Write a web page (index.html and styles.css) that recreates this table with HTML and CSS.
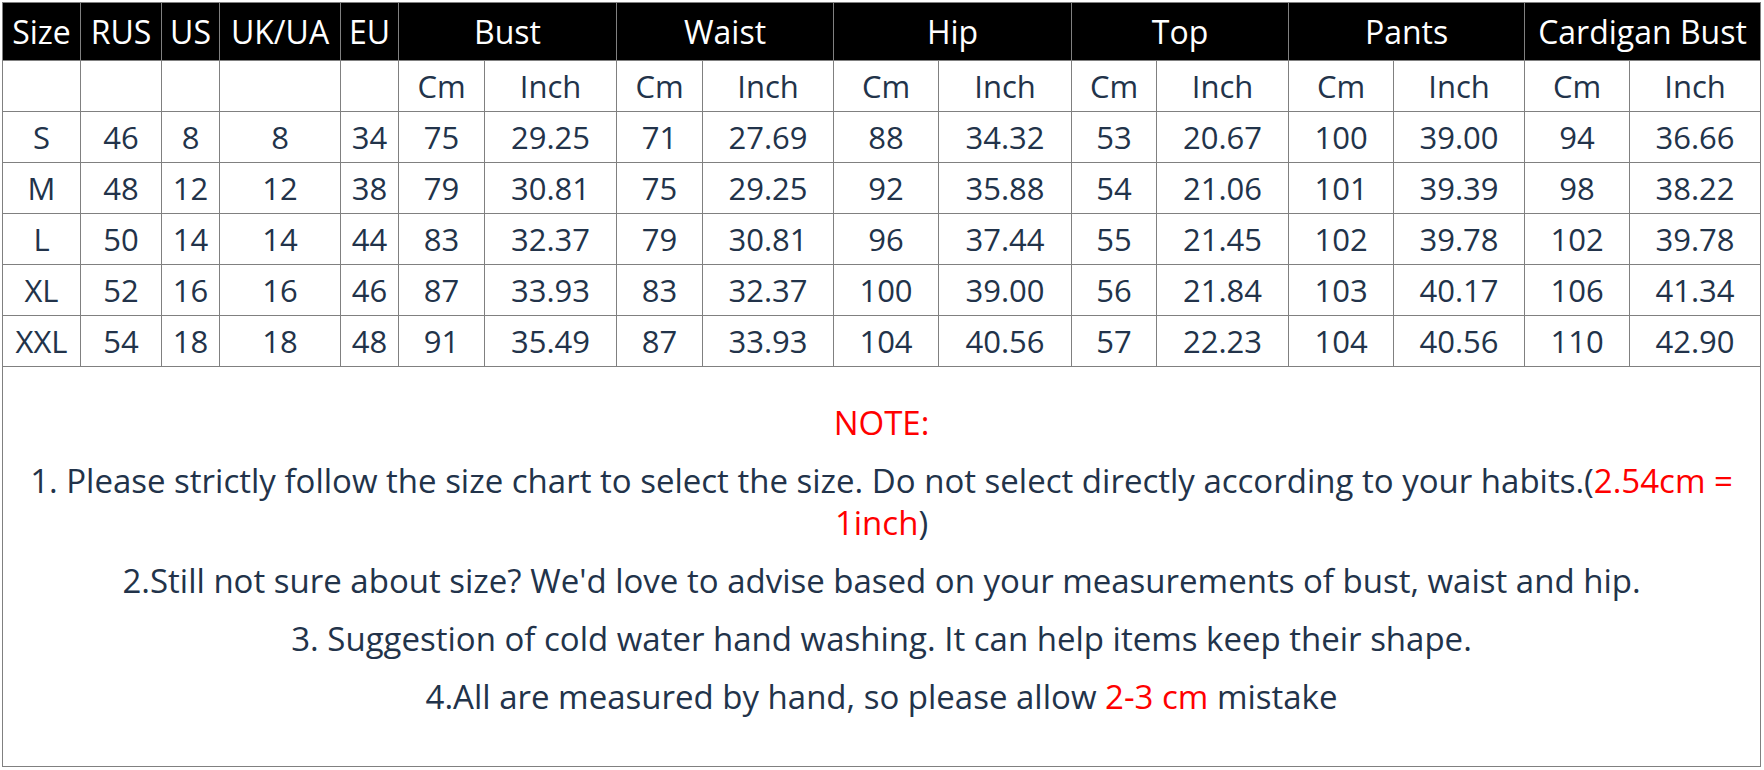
FILE: index.html
```html
<!DOCTYPE html>
<html lang="en">
<head>
<meta charset="utf-8">
<title>Size Chart</title>
<link rel="stylesheet" href="styles.css">
</head>
<body>
<table class="chart">
  <colgroup>
    <col class="c78"><col class="c81"><col class="c58"><col class="c121"><col class="c58">
    <col class="c86"><col class="c132"><col class="c86"><col class="c131">
    <col class="c105"><col class="c133"><col class="c85"><col class="c132">
    <col class="c105"><col class="c131"><col class="c105"><col class="c131">
  </colgroup>
  <thead>
    <tr class="head">
      <th>Size</th><th>RUS</th><th>US</th><th>UK/UA</th><th>EU</th>
      <th colspan="2">Bust</th><th colspan="2">Waist</th><th colspan="2">Hip</th>
      <th colspan="2">Top</th><th colspan="2">Pants</th><th colspan="2">Cardigan Bust</th>
    </tr>
  </thead>
  <tbody>
    <tr class="row">
      <td></td><td></td><td></td><td></td><td></td>
      <td>Cm</td><td>Inch</td><td>Cm</td><td>Inch</td><td>Cm</td><td>Inch</td>
      <td>Cm</td><td>Inch</td><td>Cm</td><td>Inch</td><td>Cm</td><td>Inch</td>
    </tr>
    <tr class="row">
      <td>S</td><td>46</td><td>8</td><td>8</td><td>34</td>
      <td>75</td><td>29.25</td><td>71</td><td>27.69</td><td>88</td><td>34.32</td>
      <td>53</td><td>20.67</td><td>100</td><td>39.00</td><td>94</td><td>36.66</td>
    </tr>
    <tr class="row">
      <td>M</td><td>48</td><td>12</td><td>12</td><td>38</td>
      <td>79</td><td>30.81</td><td>75</td><td>29.25</td><td>92</td><td>35.88</td>
      <td>54</td><td>21.06</td><td>101</td><td>39.39</td><td>98</td><td>38.22</td>
    </tr>
    <tr class="row">
      <td>L</td><td>50</td><td>14</td><td>14</td><td>44</td>
      <td>83</td><td>32.37</td><td>79</td><td>30.81</td><td>96</td><td>37.44</td>
      <td>55</td><td>21.45</td><td>102</td><td>39.78</td><td>102</td><td>39.78</td>
    </tr>
    <tr class="row">
      <td>XL</td><td>52</td><td>16</td><td>16</td><td>46</td>
      <td>87</td><td>33.93</td><td>83</td><td>32.37</td><td>100</td><td>39.00</td>
      <td>56</td><td>21.84</td><td>103</td><td>40.17</td><td>106</td><td>41.34</td>
    </tr>
    <tr class="row">
      <td>XXL</td><td>54</td><td>18</td><td>18</td><td>48</td>
      <td>91</td><td>35.49</td><td>87</td><td>33.93</td><td>104</td><td>40.56</td>
      <td>57</td><td>22.23</td><td>104</td><td>40.56</td><td>110</td><td>42.90</td>
    </tr>
    <tr class="notes">
      <td colspan="17">
        <p class="red">NOTE:</p>
        <p>1. Please strictly follow the size chart to select the size. Do not select directly according to your habits.(<span class="red">2.54cm =</span> <span class="red">1inch</span>)</p>
        <p>2.Still not sure about size? We'd love to advise based on your measurements of bust, waist and hip.</p>
        <p>3. Suggestion of cold water hand washing. It can help items keep their shape.</p>
        <p>4.All are measured by hand, so please allow <span class="red">2-3 cm</span> mistake</p>
      </td>
    </tr>
  </tbody>
</table>
</body>
</html>
```

FILE: styles.css
```css
html, body {
  margin: 0;
  background: #ffffff;
}
body {
  padding: 2px;
  font-family: "Open Sans", "Noto Sans", sans-serif;
  color: #22334a;
}
.chart {
  border-collapse: collapse;
  table-layout: fixed;
  width: 1759px;
}
.c78 { width: 78px; }
.c81 { width: 81px; }
.c58 { width: 58px; }
.c121 { width: 121px; }
.c86 { width: 86px; }
.c85 { width: 85px; }
.c105 { width: 105px; }
.c131 { width: 131px; }
.c132 { width: 132px; }
.c133 { width: 133px; }
.chart th,
.chart td {
  border: 1px solid #808080;
  padding: 0;
  text-align: center;
  vertical-align: middle;
  white-space: nowrap;
  font-size: 31px;
  font-weight: 400;
}
.head th {
  background: #000000;
  color: #ffffff;
  height: 57px;
  font-size: 32px;
}
.row td {
  height: 50px;
}
.notes td {
  height: 364px;
  vertical-align: top;
  white-space: normal;
  padding: 35px 10px 0;
  font-size: 33px;
}
.notes p {
  margin: 0 0 16px;
  line-height: 42px;
}
.red {
  color: #ff0000;
}
```
